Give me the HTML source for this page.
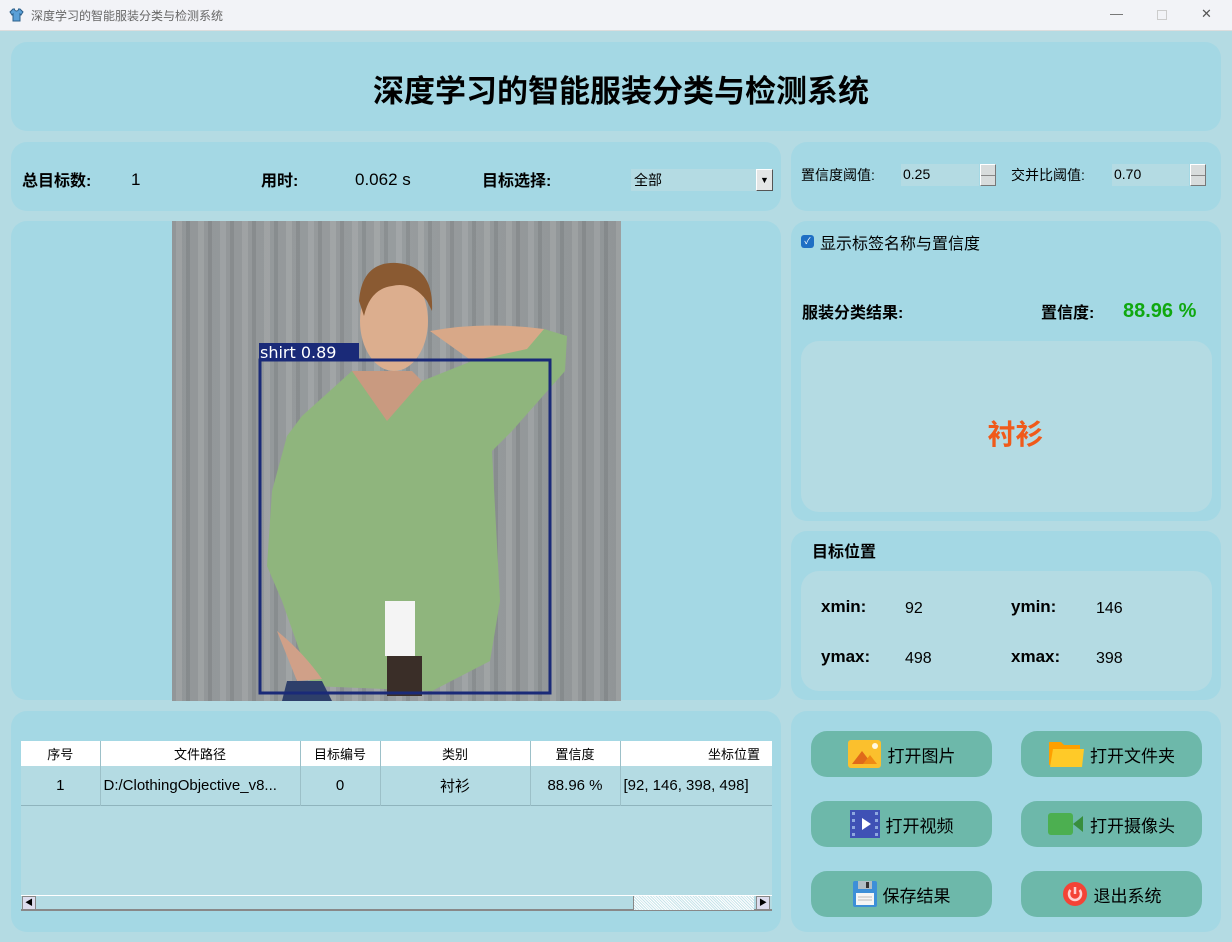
<!DOCTYPE html>
<html><head><meta charset="utf-8"><style>
*{margin:0;padding:0;box-sizing:border-box}
body{width:1232px;height:942px;position:relative;overflow:hidden;background:#b4dbe3;font-family:"Liberation Sans","Noto Sans CJK SC",sans-serif;color:#000}
.a{position:absolute}
.p{position:absolute;background:#a4d8e4;border-radius:16px}
.in{position:absolute;background:#b4dbe3;border-radius:18px}
.b{font-weight:bold}
.btn{position:absolute;width:181px;height:46px;background:#6db8aa;border-radius:16px;font-size:17px;display:flex;align-items:center;justify-content:center;gap:6px}
.spin{position:absolute;background:#b4dbe3;height:22px;font-size:14px;padding:2px 2px}
.sb{position:absolute;width:16px;height:22px;background:#d8dcdc;border:1px solid #777;border-top-color:#fff;border-left-color:#fff}
.sb:after{content:"";position:absolute;left:0;right:0;top:10px;border-top:1px solid #888}
table{border-collapse:collapse;font-size:13px}
td{border-right:1px solid #9cc0c8;text-align:center}
</style></head><body>
<div class="a" style="left:0;top:0;width:1232px;height:31px;background:#f2f3f7;border-bottom:1px solid #ddd"></div>
<svg class="a" style="left:9px;top:8px" width="15" height="14" viewBox="0 0 15 14"><path d="M4 1L1 4l2 3 1-1v7h7V6l1 1 2-3-3-3H9.5a2 2 0 0 1-4 0z" fill="#5aa0d8" stroke="#2c5f8a" stroke-width="1"/></svg>
<div class="a" style="left:31px;top:7px;font-size:12px;color:#666">深度学习的智能服装分类与检测系统</div>
<div class="a" style="left:1110px;top:6px;font-size:13px;color:#666">—</div>
<div class="a" style="left:1157px;top:10px;width:10px;height:10px;border:1px solid #ccc"></div>
<div class="a" style="left:1201px;top:6px;font-size:13px;color:#555">✕</div>

<div class="p" style="left:11px;top:42px;width:1210px;height:89px"></div>
<div class="a b" style="left:0;width:1242px;top:66px;text-align:center;font-size:31px">深度学习的智能服装分类与检测系统</div>

<div class="p" style="left:11px;top:142px;width:770px;height:69px"></div>
<div class="a b" style="left:22px;top:167px;font-size:16px">总目标数:</div>
<div class="a" style="left:131px;top:170px;font-size:17px">1</div>
<div class="a b" style="left:261px;top:167px;font-size:16px">用时:</div>
<div class="a" style="left:355px;top:170px;font-size:17px">0.062 s</div>
<div class="a b" style="left:482px;top:167px;font-size:16px">目标选择:</div>
<div class="a" style="left:631px;top:169px;width:142px;height:22px;background:#b4dbe3;font-size:14px;padding:1px 3px">全部</div>
<div class="a" style="left:756px;top:169px;width:17px;height:22px;background:#e4e6e6;border:1px solid #555;border-top-color:#fff;border-left-color:#fff;font-size:9px;text-align:center;line-height:20px">▼</div>

<div class="p" style="left:791px;top:142px;width:430px;height:69px"></div>
<div class="a" style="left:801px;top:165px;font-size:14px">置信度阈值:</div>
<div class="spin" style="left:901px;top:164px;width:78px">0.25</div>
<div class="sb" style="left:980px;top:164px"></div>
<div class="a" style="left:1011px;top:165px;font-size:14px">交并比阈值:</div>
<div class="spin" style="left:1112px;top:164px;width:77px">0.70</div>
<div class="sb" style="left:1190px;top:164px"></div>

<div class="p" style="left:11px;top:221px;width:770px;height:479px"></div>
<svg class="a" style="left:172px;top:221px" width="449" height="480" viewBox="0 0 449 480">
<defs><linearGradient id="w" x1="0" x2="1"><stop offset="0" stop-color="#8f9294"/><stop offset=".5" stop-color="#9a9ea0"/><stop offset="1" stop-color="#8b8f91"/></linearGradient>
<pattern id="st" width="22" height="480" patternUnits="userSpaceOnUse"><rect width="22" height="480" fill="#959a9c"/><rect x="4" width="6" height="480" fill="#a9adae"/><rect x="14" width="4" height="480" fill="#7f8486"/></pattern></defs>
<rect width="449" height="480" fill="url(#st)"/>
<rect width="449" height="480" fill="url(#w)" opacity=".45"/>
<path d="M258 110Q310 100 372 108L376 140 300 140Z" fill="#d8a888"/>
<path d="M180 150L250 160 300 140 355 128 372 108 395 115 393 150 340 210 320 230 328 380 318 440 260 470 140 465 110 380 95 345 100 270 115 215 130 195Z" fill="#8fb57d"/>
<path d="M180 150L215 200 250 160 240 150Z" fill="#c99a80"/>
<rect x="213" y="380" width="30" height="55" fill="#f4f4f4"/>
<rect x="215" y="435" width="35" height="40" fill="#3a2e28"/>
<path d="M115 460L150 460 160 480 110 480Z" fill="#2e3f6a"/>
<path d="M105 410Q130 430 150 458L125 460Z" fill="#d0a088"/>
<ellipse cx="222" cy="100" rx="34" ry="50" fill="#dcae8e"/>
<path d="M187 80Q190 40 225 42Q262 45 260 90L255 80Q240 60 220 65Q198 68 192 95Z" fill="#8a5a32"/>
<rect x="88" y="139" width="290" height="333" fill="none" stroke="#1a2a78" stroke-width="3"/>
<rect x="87" y="122" width="100" height="18" fill="#1a2a78"/>
<text x="88" y="137" fill="#fff" font-family="DejaVu Sans,sans-serif" font-size="16">shirt 0.89</text>
</svg>

<div class="p" style="left:791px;top:221px;width:430px;height:300px"></div>
<div class="a" style="left:801px;top:235px;width:13px;height:13px;background:#1f6fc4;border-radius:3px;color:#fff;font-size:9px;text-align:center;line-height:13px">✓</div>
<div class="a" style="left:820px;top:230px;font-size:16px">显示标签名称与置信度</div>
<div class="a b" style="left:802px;top:299px;font-size:16px">服装分类结果:</div>
<div class="a b" style="left:1041px;top:299px;font-size:16px">置信度:</div>
<div class="a b" style="left:1123px;top:300px;font-size:20px;color:#10a810">88.96 %</div>
<div class="in" style="left:801px;top:341px;width:411px;height:171px"></div>
<div class="a b" style="left:801px;width:429px;top:413px;text-align:center;font-size:28px;color:#f05a1a">衬衫</div>

<div class="p" style="left:791px;top:531px;width:430px;height:169px"></div>
<div class="a b" style="left:812px;top:538px;font-size:16px">目标位置</div>
<div class="in" style="left:801px;top:571px;width:411px;height:120px"></div>
<div class="a b" style="left:821px;top:597px;font-size:17px">xmin:</div>
<div class="a" style="left:905px;top:600px;font-size:16px">92</div>
<div class="a b" style="left:1011px;top:597px;font-size:17px">ymin:</div>
<div class="a" style="left:1096px;top:600px;font-size:16px">146</div>
<div class="a b" style="left:821px;top:647px;font-size:17px">ymax:</div>
<div class="a" style="left:905px;top:650px;font-size:16px">498</div>
<div class="a b" style="left:1011px;top:647px;font-size:17px">xmax:</div>
<div class="a" style="left:1096px;top:650px;font-size:16px">398</div>

<div class="p" style="left:11px;top:711px;width:770px;height:221px"></div>
<div class="a" style="left:21px;top:741px;width:751px;height:170px;background:#b4dbe3"></div>
<table class="a" style="left:21px;top:741px;width:751px">
<tr style="background:#fff;height:25px"><td style="width:79px">序号</td><td style="width:200px">文件路径</td><td style="width:80px">目标编号</td><td style="width:150px">类别</td><td style="width:90px">置信度</td><td style="text-align:right;padding-right:12px;border-right:0">坐标位置</td></tr>
<tr style="height:39px;font-size:15px;border-bottom:1px solid #8fb4bd"><td>1</td><td style="text-align:left;padding-left:3px">D:/ClothingObjective_v8...</td><td>0</td><td>衬衫</td><td>88.96 %</td><td style="text-align:left;padding-left:3px;border-right:0">[92, 146, 398, 498]</td></tr>
</table>
<div class="a" style="left:21px;top:895px;width:751px;height:16px;border-top:1px solid #fff;border-bottom:2px solid #888;background:#b4dbe3"></div>
<div class="a" style="left:634px;top:896px;width:120px;height:14px;background:repeating-linear-gradient(45deg,#fff 0 1px,#c8e4ea 1px 2px)"></div>
<div class="a" style="left:22px;top:896px;width:14px;height:14px;background:#dde;border:1px solid #888;font-size:8px;text-align:center;line-height:12px">◀</div>
<div class="a" style="left:756px;top:896px;width:14px;height:14px;background:#dde;border:1px solid #888;font-size:8px;text-align:center;line-height:12px">▶</div>
<div class="a" style="left:37px;top:896px;width:597px;height:14px;border-right:1px solid #888"></div>

<div class="p" style="left:791px;top:711px;width:430px;height:221px"></div>
<div class="btn" style="left:811px;top:731px"><svg width="34" height="28"><rect width="33" height="28" rx="3" fill="#fbc02d"/><path d="M4 24L14 11 24 24Z" fill="#e0691a"/><path d="M15 24L22 15 29 24Z" fill="#ef8a14"/><circle cx="27" cy="6" r="3" fill="#fff8e0"/></svg>打开图片</div>
<div class="btn" style="left:1021px;top:731px"><svg width="36" height="28"><path d="M1 2h12l3 3h16v20H1z" fill="#ffa000"/><path d="M5 9h31l-2 18H2z" fill="#ffca28"/></svg>打开文件夹</div>
<div class="btn" style="left:811px;top:801px"><svg width="30" height="28"><rect width="30" height="28" fill="#3f51b5"/><g fill="#8fa8e0"><rect x="2" y="2" width="3" height="3"/><rect x="2" y="9" width="3" height="3"/><rect x="2" y="16" width="3" height="3"/><rect x="2" y="23" width="3" height="3"/><rect x="25" y="2" width="3" height="3"/><rect x="25" y="9" width="3" height="3"/><rect x="25" y="16" width="3" height="3"/><rect x="25" y="23" width="3" height="3"/></g><path d="M12 8v12l9-6z" fill="#fff"/></svg>打开视频</div>
<div class="btn" style="left:1021px;top:801px"><svg width="36" height="22"><rect width="25" height="22" rx="3" fill="#4caf50"/><path d="M25 11l10-8v16z" fill="#388e3c"/></svg>打开摄像头</div>
<div class="btn" style="left:811px;top:871px"><svg width="24" height="26"><rect width="24" height="26" rx="2" fill="#3d8fd8"/><rect x="5" y="0" width="14" height="8" fill="#b0bec5"/><rect x="13" y="1" width="3" height="6" fill="#333"/><rect x="3" y="12" width="18" height="12" fill="#f5f5f5"/><path d="M5 16h14M5 19h14" stroke="#bbb"/></svg>保存结果</div>
<div class="btn" style="left:1021px;top:871px"><svg width="26" height="26"><circle cx="13" cy="13" r="12" fill="#f44336"/><path d="M8.5 9a6 6 0 1 0 9 0" fill="none" stroke="#ffd0d0" stroke-width="2.5"/><path d="M13 6v7" stroke="#ffd0d0" stroke-width="2.5"/></svg>退出系统</div>
</body></html>
